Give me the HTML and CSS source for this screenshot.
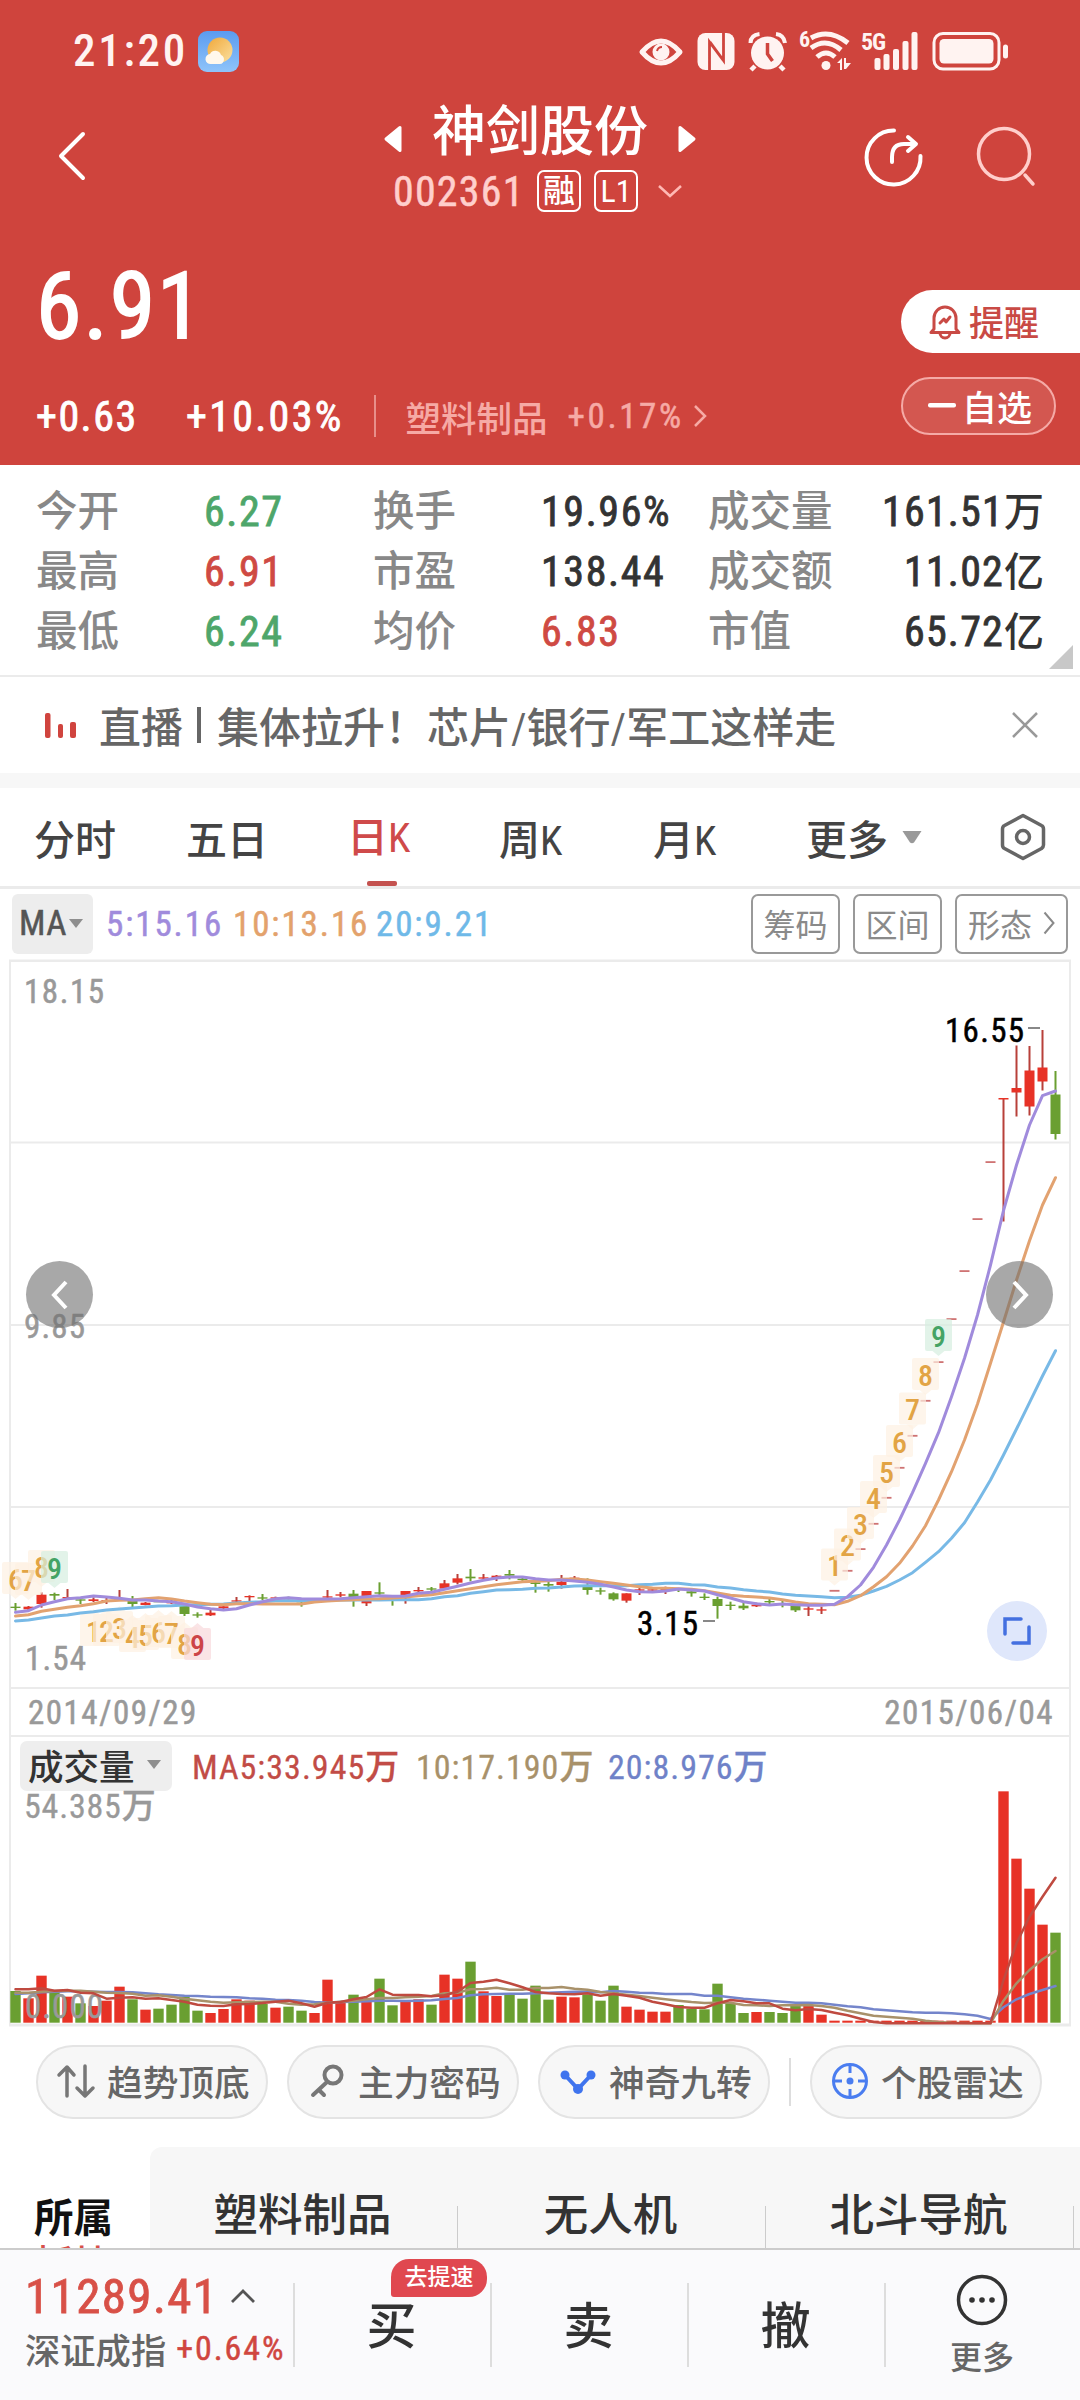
FILE: index.html
```html
<!DOCTYPE html>
<html lang="zh-CN">
<head>
<meta charset="utf-8">
<title>神剑股份 002361</title>
<link rel="stylesheet" href="styles.css">
</head>
<body>
<div class="phone">
  <header class="hero">
    <div class="status">
      <span class="clock">21:20</span>
      <svg class="weather" width="41" height="41" viewBox="0 0 41 41">
        <defs>
          <linearGradient id="sky" x1="0" y1="0" x2="0" y2="1"><stop offset="0" stop-color="#5b9bf0"/><stop offset="1" stop-color="#8fc4fa"/></linearGradient>
          <linearGradient id="sun" x1="0" y1="0" x2="1" y2="1"><stop offset="0" stop-color="#f0a83a"/><stop offset="1" stop-color="#fbe0a0"/></linearGradient>
        </defs>
        <rect width="41" height="41" rx="9" fill="url(#sky)"/>
        <circle cx="22" cy="19" r="12.500" fill="url(#sun)"/>
        <path d="M13 33a5 5 0 0 1-1-10 6 6 0 0 1 11 1 4.700 4.700 0 0 1-1 9z" fill="#fff8ec"/>
      </svg>
      <svg class="status-icons" width="380" height="44" viewBox="0 0 380 44" fill="#fff3f1">
        <path d="M3 23Q22 1 41 23Q22 45 3 23Z" fill="none" stroke="#fff3f1" stroke-width="5" stroke-linejoin="round"/>
        <circle cx="22" cy="23" r="8.500"/><path d="M18 22q1-4 5-4" stroke="#cf443d" stroke-width="2" fill="none"/>
        <rect x="58.500" y="4" width="37" height="37" rx="8"/>
        <path d="M70.500 41V13L84 31M84.500 4V31.500L71 13" fill="none" stroke="#cf443d" stroke-width="2.800"/>
        <circle cx="128.500" cy="24" r="16.500"/>
        <path d="M116 37l-4 4M141 37l4 4" stroke="#fff3f1" stroke-width="4.500"/>
        <path d="M111.500 14q0-8 9-9M137 5q8 1 9 9" stroke="#fff3f1" stroke-width="4" fill="none"/>
        <path d="M128.500 14v11l5 7" stroke="#cf443d" stroke-width="3.500" fill="none"/>
        <text x="160" y="18" font-size="22" class="tiny">6</text>
        <g fill="none" stroke="#fff3f1" stroke-width="5">
          <path d="M172 9Q190-1 209 14"/><path d="M172 19Q187 8 202 21"/><path d="M178 28Q187 20 196 28"/>
        </g>
        <circle cx="187" cy="36.500" r="4.500"/>
        <path d="M198 34l5-5v12h-2v-7zM205 29h2v5h5l-5 6h-2z"/>
        <text x="222" y="21" font-size="24" class="tiny" textLength="25">5G</text>
        <rect x="235.500" y="29" width="6" height="12" rx="2"/><rect x="244.500" y="25" width="6" height="16" rx="2"/><rect x="254" y="20" width="6" height="21" rx="2"/><rect x="263.500" y="12" width="6" height="29" rx="2"/><rect x="272.500" y="3" width="6" height="38" rx="2"/>
        <rect x="295" y="4.500" width="65" height="35.500" rx="9" fill="none" stroke="#fff3f1" stroke-width="3"/>
        <rect x="300.500" y="10" width="54" height="24.500" rx="4.500"/>
        <rect x="364" y="15.500" width="5" height="14" rx="2.500"/>
      </svg>
    </div>

    <nav class="titlebar">
      <svg class="back" width="30" height="50" viewBox="0 0 30 50"><path d="M26 3L4 25L26 47" fill="none" stroke="#fff" stroke-width="4" stroke-linecap="round" stroke-linejoin="round"/></svg>
      <div class="title">
        <div class="name">
          <svg width="20" height="28" viewBox="0 0 20 28"><path d="M17 2.500v23L3 14z" fill="#fff" stroke="#fff" stroke-width="3" stroke-linejoin="round"/></svg>
          <h1>神剑股份</h1>
          <svg width="20" height="28" viewBox="0 0 20 28"><path d="M3 2.500v23L17 14z" fill="#fff" stroke="#fff" stroke-width="3" stroke-linejoin="round"/></svg>
        </div>
        <div class="code">
          <span>002361</span><b>融</b><b>L1</b>
          <svg width="26" height="14" viewBox="0 0 26 14"><path d="M2 2l11 10L24 2" fill="none" stroke="#ffb9b4" stroke-width="2.500"/></svg>
        </div>
      </div>
      <div class="actions">
        <svg width="62" height="62" viewBox="0 0 62 62" fill="none" stroke="#fff" stroke-width="4" stroke-linecap="round"><path d="M32 4.500A27 27 0 1 0 58.500 30"/><path d="M30 36v-5q0-13 12-13H53M46 11l8 7-8 7" stroke-linejoin="round"/></svg>
        <svg width="62" height="62" viewBox="0 0 62 62" fill="none" stroke="#ffcecb" stroke-width="3.500" stroke-linecap="round"><circle cx="28" cy="28" r="25.500"/><path d="M49 49l8 9"/></svg>
      </div>
    </nav>

    <div class="quote">
      <div class="quote-main">
        <div class="price">6.91</div>
        <div class="change">
          <span class="diff">+0.63</span><span class="pct">+10.03%</span><i></i><span class="sector">塑料制品</span><span class="sector-pct">+0.17%</span>
          <svg width="14" height="24" viewBox="0 0 14 24"><path d="M2 2l10 10L2 22" fill="none" stroke="#f6aaa5" stroke-width="2.500"/></svg>
        </div>
      </div>
      <div class="quote-side">
        <div class="remind">
          <svg width="34" height="36" viewBox="0 0 34 36" fill="none" stroke="#c94a45" stroke-width="3" stroke-linejoin="round" stroke-linecap="round"><path d="M6 26V15a11 11 0 0 1 22 0V26L31 29.500H3z"/><path d="M12 20l4-4 2 3 4-5"/><path d="M12 30a5 5 0 0 0 10 0"/></svg>
          <span>提醒</span>
        </div>
        <div class="watch"><svg width="29" height="5"><rect width="28" height="4.500" rx="2" fill="#fff"/></svg><span>自选</span></div>
      </div>
    </div>
  </header>

  <section class="stats">
    <span>今开</span><b class="green">6.27</b><span>换手</span><b>19.96%</b><span>成交量</span><b class="end">161.51<em>万</em></b>
    <span>最高</span><b class="red">6.91</b><span>市盈</span><b>138.44</b><span>成交额</span><b class="end">11.02<em>亿</em></b>
    <span>最低</span><b class="green">6.24</b><span>均价</span><b class="red">6.83</b><span>市值</span><b class="end">65.72<em>亿</em></b>
    <div class="corner"></div>
  </section>

  <section class="news">
    <svg width="32" height="26" viewBox="0 0 32 26" fill="#d0443e"><rect x="0" y="1" width="5.500" height="25" rx="2"/><rect x="13" y="12" width="5" height="14" rx="2"/><rect x="25" y="10" width="6" height="16" rx="2"/></svg>
    <p>直播<u></u>集体拉升！芯片/银行/军工这样走</p>
    <svg width="28" height="28" viewBox="0 0 28 28"><path d="M2 2l24 24M26 2L2 26" stroke="#999" stroke-width="2.500"/></svg>
  </section>

  <nav class="tabs">
    <span class="t1">分时</span><span class="t2">五日</span><span class="t3 on">日K</span><span class="t4">周K</span><span class="t5">月K</span>
    <span class="t6">更多<svg width="22" height="14" viewBox="0 0 22 14"><path d="M1.500 1h19L13 12.500q-2 1.500-4 0z" fill="#999"/></svg></span>
    <svg class="hex" width="46" height="48" viewBox="0 0 46 48" fill="none" stroke="#666" stroke-width="3.500" stroke-linejoin="round"><path d="M23 2.500L41.500 12.500q2 1 2 3.500V32q0 2-2 3.500L23 45.500L4.500 35.500q-2-1-2-3.500V16q0-2.500 2-3.500z"/><circle cx="23" cy="24" r="6.500"/></svg>
  </nav>

  <section class="ma">
    <div class="ma-pick">MA<svg width="14" height="9" viewBox="0 0 14 9"><path d="M0 0h14L7 9z" fill="#8e8e8e"/></svg></div>
    <span class="ma5">5:15.16</span><span class="ma10">10:13.16</span><span class="ma20">20:9.21</span>
    <div class="tools"><b>筹码</b><b>区间</b><b>形态<svg width="12" height="24" viewBox="0 0 12 24"><path d="M1.500 1.500L10.500 12L1.500 22.500" fill="none" stroke="#8a8a8a" stroke-width="2"/></svg></b></div>
  </section>

  <section class="chart">
    <svg id="kline" width="1080" height="729" viewBox="0 960 1080 729"></svg>
    <button class="pan left"><svg width="18" height="30" viewBox="0 0 18 30"><path d="M15 2L3 15L15 28" fill="none" stroke="#fff" stroke-width="4"/></svg></button>
    <button class="pan right"><svg width="18" height="30" viewBox="0 0 18 30"><path d="M3 2L15 15L3 28" fill="none" stroke="#fff" stroke-width="4"/></svg></button>
    <button class="full"><svg width="28" height="28" viewBox="0 0 28 28"><path d="M18 2H2V17M26 10V26H10" fill="none" stroke="#4470e0" stroke-width="3.500" stroke-linecap="round"/></svg></button>
  </section>
  <div class="dates"><span>2014/09/29</span><span>2015/06/04</span></div>

  <section class="volume">
    <svg id="vol" width="1080" height="291" viewBox="0 1737 1080 291"></svg>
    <div class="vol-head">
      <div class="vol-pick">成交量<svg width="14" height="9" viewBox="0 0 14 9"><path d="M0 0h14L7 9z" fill="#8e8e8e"/></svg></div>
      <span class="v5">MA5:33.945万</span><span class="v10">10:17.190万</span><span class="v20">20:8.976万</span>
    </div>
    <div class="vol-max">54.385万</div>
  </section>

  <section class="chips">
    <div class="chip"><svg width="38" height="34" viewBox="0 0 38 34" fill="none" stroke="#777" stroke-width="3.500" stroke-linecap="round" stroke-linejoin="round"><path d="M10 32V3M2 11l8-8 7 8M28 2v29M20 24l8 8 8-8"/></svg>趋势顶底</div>
    <div class="chip"><svg width="38" height="34" viewBox="0 0 38 34" fill="none" stroke="#777" stroke-width="4" stroke-linecap="round"><circle cx="25" cy="11" r="8.500"/><path d="M19 18L5 31M11 26l5 5M6 24"/></svg>主力密码</div>
    <div class="chip"><svg width="38" height="34" viewBox="0 0 38 34" fill="#3f74ee"><path d="M6 11l13 14L32 11" fill="none" stroke="#3f74ee" stroke-width="4"/><circle cx="6" cy="11" r="4.500"/><circle cx="32" cy="11" r="4.500"/><circle cx="19" cy="25" r="5"/></svg>神奇九转</div>
    <i></i>
    <div class="chip"><svg width="38" height="38" viewBox="0 0 38 38" fill="none" stroke="#4a7df0" stroke-width="3"><circle cx="19" cy="19" r="16.500"/><path d="M19 2v9M19 27v9M2 19h9M27 19h9"/><circle cx="19" cy="19" r="3.500" fill="#4a7df0" stroke="none"/></svg>个股雷达</div>
  </section>

  <section class="boards">
    <div class="belong"><b>所属</b><em>板块</em></div>
    <div class="board-list"><span>塑料制品</span><span>无人机</span><span>北斗导航</span><span></span></div>
  </section>

  <footer class="bottom">
    <div class="index">
      <div class="idx-val">11289.41<svg width="26" height="16" viewBox="0 0 26 16"><path d="M2 14L13 3L24 14" fill="none" stroke="#555" stroke-width="2.800"/></svg></div>
      <div class="idx-name">深证成指<span>+0.64%</span></div>
    </div>
    <div class="trade">买<mark>去提速</mark></div>
    <div class="trade">卖</div>
    <div class="trade">撤</div>
    <div class="more"><svg width="52" height="52" viewBox="0 0 52 52"><circle cx="26" cy="26" r="23.500" fill="none" stroke="#333" stroke-width="3.500"/><circle cx="16" cy="26" r="2.800" fill="#333"/><circle cx="26" cy="26" r="2.800" fill="#333"/><circle cx="36" cy="26" r="2.800" fill="#333"/></svg><span>更多</span></div>
  </footer>
</div>
<script src="chart.js"></script>
</body>
</html>
```
FILE: styles.css
```css
* { box-sizing: border-box; margin: 0; padding: 0; }
body { width: 1080px; background: #fff; }
svg { display: block; flex: none; overflow: visible; }
b, em, i, u { font-weight: inherit; font-style: normal; text-decoration: none; }
.phone {
  width: 1080px; height: 2400px; overflow: hidden;
  display: flex; flex-direction: column;
  font-family: Roboto, "Noto Sans CJK SC", sans-serif;
  font-stretch: 75%; font-weight: 450; white-space: nowrap; background: #fff;
}
.phone > * { flex: none; }

/* figures are drawn slightly heavier than the regular face */
.diff, .pct, .stats b, .idx-val { -webkit-text-stroke: .8px currentColor; }
.code span, .sector-pct, .ma-pick, .ma span, .dates, .idx-name span { -webkit-text-stroke: .5px currentColor; }
.v5, .v10, .v20, .vol-max { -webkit-text-stroke: .3px currentColor; }
.price { -webkit-text-stroke: 1.800px currentColor; }

/* red header */
.hero { height: 465px; background: #cf443d; color: #fff; }
.status { height: 100px; display: flex; align-items: center; padding: 2px 0 0 73px; }
.clock { font-size: 45px; line-height: 50px; width: 125px; letter-spacing: 2.700px; font-weight: 500; color: #fff3f1; }
.status-icons { margin-left: 400px; }
.tiny { font-family: Roboto, sans-serif; font-weight: 700; font-stretch: 75%; }
.titlebar { height: 140px; display: flex; position: relative; padding-left: 57px; }
.back { margin-top: 31px; }
.title { width: 460px; margin-left: 223px; display: flex; flex-direction: column; }
.name { display: flex; align-items: center; justify-content: center; gap: 29px; height: 62px; padding-top: 4px; }
.name h1 { font-size: 54px; font-weight: 500; line-height: 62px; }
.name svg { margin-top: 12px; }
.code { display: flex; align-items: center; height: 50px; margin-top: 4px; padding-left: 83px; font-size: 42px; }
.code span { color: #ffcfcc; letter-spacing: 1.200px; width: 144px; }
.code b { height: 42px; width: 44px; margin-right: 13px; border: 2px solid #fff; border-radius: 7px; font-size: 32px; line-height: 39px; text-align: center; }
.code svg { margin-left: 6px; }
.actions { display: flex; gap: 52px; margin-left: 92px; padding-top: 26px; }
.quote { display: flex; justify-content: space-between; height: 224px; }
.quote-main { padding-left: 36px; }
.price { font-size: 92px; line-height: 100px; height: 127px; padding-top: 17px; letter-spacing: 2px; }
.change { display: flex; align-items: center; height: 60px; margin-top: 19px; font-size: 42px; }
.diff { width: 150px; letter-spacing: 1.500px; }
.pct { width: 188px; letter-spacing: 2.300px; }
.change i { width: 1.500px; height: 42px; background: #e88f8a; }
.sector, .sector-pct { font-size: 35px; color: #f6aaa5; }
.sector { margin-left: 30px; width: 162px; font-size: 35.500px; }
.sector-pct { letter-spacing: 2.600px; width: 125px; }
.quote-side { display: flex; flex-direction: column; width: 179px; padding-top: 50px; gap: 24px; }
.remind { height: 63px; background: #fff; color: #c94a45; border-radius: 32px 0 0 32px; display: flex; align-items: center; padding: 0 0 2px 27px; gap: 7px; font-size: 35px; }
.watch { height: 58px; width: 155px; border: 2px solid #f5aaa6; border-radius: 30px; background: rgba(255,255,255,.1); display: flex; align-items: center; padding: 0 0 2px 25px; gap: 5px; font-size: 35px; }

/* quote details */
.stats { position: relative; height: 212px; padding: 17px 38px 0 36px; border-bottom: 2px solid #ebebeb;
  display: grid; grid-template-columns: 168px 169px 168px 167px 150px 1fr; grid-auto-rows: 60px; align-items: center; font-size: 41.500px; line-height: 60px; color: #333; }
.stats span { color: #888; }
.stats b { font-size: 42px; letter-spacing: 1.600px; }
.stats em { font-size: 40px; letter-spacing: 0; -webkit-text-stroke: 0; }
.stats .green { color: #4ea66a; }
.stats .red { color: #cf4a43; }
.stats .end { justify-self: end; margin-right: -2px; letter-spacing: 1.200px; }
.corner { position: absolute; right: 7px; bottom: 6px; border-left: 24px solid transparent; border-bottom: 24px solid #c8c8c8; }

.news { height: 96px; display: flex; align-items: center; padding: 0 41px 1px 45px; color: #666; font-size: 42px; }
.news p { margin-left: 22px; flex: 1; display: flex; align-items: center; }
.news u { width: 4px; height: 36px; background: #666; margin: 0 16px 0 14px; }

/* period tabs */
.tabs { height: 116px; border-top: 15px solid #f7f7f7; border-bottom: 3px solid #ebebeb; display: flex; align-items: center; font-size: 41px; color: #444; padding-left: 34px; padding-bottom: 1px; }
.tabs .t1 { width: 152px; } .tabs .t2 { width: 161px; } .tabs .t3 { width: 152px; } .tabs .t4 { width: 154px; } .tabs .t5 { width: 153px; }
.t6 { width: 194px; display: flex; align-items: center; gap: 13px; }
.tabs .on { color: #cf4a4a; position: relative; height: 98px; line-height: 100px; }
.tabs .on::after { content: ""; position: absolute; left: 20px; bottom: 0; width: 30px; height: 5px; border-radius: 2px; background: #c4524f; }

/* moving averages and tools */
.ma { height: 71px; display: flex; align-items: center; padding: 0 12px 2px; font-size: 35px; }
.ma-pick { width: 81px; height: 60px; background: #ededed; border-radius: 6px; display: flex; align-items: center; gap: 2px; padding-left: 7px; color: #555; letter-spacing: .500px; }
.ma span { letter-spacing: 1.900px; padding-top: 2px; }
.ma5 { margin-left: 13px; width: 127px; color: #a08bdc; }
.ma10 { width: 143px; color: #e3a26c; }
.ma20 { color: #6fb9e8; }
.tools { margin-left: auto; display: flex; gap: 13px; }
.tools b { height: 60px; width: 89px; border: 2px solid #999; border-radius: 7px; display: flex; align-items: center; justify-content: center; gap: 11px; font-size: 32px; color: #8a8a8a; font-weight: 400; padding-bottom: 2px; }
.tools b:last-child { width: 113px; }

/* charts */
.chart { position: relative; height: 729px; }
.chart text, .volume text { font-family: Roboto, sans-serif; font-stretch: 75%; }
.chart button { position: absolute; border: 0; border-radius: 50%; display: flex; align-items: center; justify-content: center; }
.pan { width: 67px; height: 67px; background: rgba(110,110,110,.6); top: 301px; }
.pan.left { left: 26px; }
.pan.right { left: 986px; }
.full { width: 60px; height: 60px; left: 987px; top: 641px; background: #dfe7fb; }
.dates { height: 48px; margin: 0 9px; padding: 0 15px 0 17px; border: solid #ebebeb; border-width: 0 2px 2px; display: flex; align-items: center; justify-content: space-between; font-size: 33px; letter-spacing: 1.500px; color: #999; }
.volume { position: relative; height: 291px; }
.volume > svg { position: absolute; left: 0; top: 0; }
.vol-head { position: relative; display: flex; align-items: center; height: 56px; padding: 0 0 1px 20px; font-size: 34px; letter-spacing: 1px; }
.vol-pick { width: 152px; height: 50px; border-radius: 7px; background: #eee; display: flex; align-items: center; gap: 12px; padding-left: 8px; margin-top: 2px; font-size: 35.500px; letter-spacing: 0; color: #333; padding-bottom: 2px; }
.v5 { width: 224px; margin-left: 20px; color: #c24c46; }
.v10 { width: 192px; color: #a8916a; }
.v20 { color: #6f82c8; }
.vol-max { position: relative; padding-left: 24px; font-size: 34px; letter-spacing: .800px; line-height: 36px; margin-top: -5px; color: #999; }

.chips { display: flex; height: 119px; padding: 17px 0 0 36px; align-items: flex-start; }
.chip { width: 232px; height: 74px; margin-right: 19px; border: 2px solid #e4e4e4; border-radius: 37px; background: #f7f7f7; display: flex; align-items: center; padding: 0 0 3px 19px; gap: 12px; font-size: 35.700px; color: #666; }
.chips i { width: 2px; height: 48px; background: #ddd; margin: 13px 19px 0 0; }

.boards { height: 101px; display: flex; overflow: hidden; }
.belong { width: 150px; padding: 48px 0 0 34px; display: flex; flex-direction: column; font-size: 39.500px; line-height: 47px; }
.belong b { font-weight: 700; color: #111; }
.belong em { color: #d8504a; }
.board-list { flex: 1; background: #f7f7f7; border-top-left-radius: 12px; display: flex; padding-top: 35px; overflow: hidden; }
.board-list span { flex: none; width: 308px; padding-right: 3px; text-align: center; font-size: 44.500px; line-height: 68px; color: #333; background: linear-gradient(#ccc,#ccc) right 24px / 1.500px 60px no-repeat; }

.bottom { height: 152px; background: #fafafc; border-top: 2px solid #ccc; display: flex; }
.index { width: 293px; padding: 15px 0 0 25px; }
.idx-val { display: flex; align-items: center; gap: 12px; height: 62px; font-size: 49px; letter-spacing: 1.400px; color: #d85047; }
.idx-name { display: flex; align-items: center; height: 42px; font-size: 35.300px; color: #666; }
.idx-name span { font-size: 34px; color: #d0463f; margin-left: 10px; letter-spacing: 1.900px; }
.trade { position: relative; width: 197px; font-size: 50px; font-weight: 500; color: #333; text-align: center; line-height: 155px; background: linear-gradient(#ddd,#ddd) left 33px / 2px 84px no-repeat; }
.trade mark { position: absolute; left: 98px; top: 9px; width: 96px; height: 38px; border-radius: 18px 18px 18px 3px; background: #e04850; color: #fff; font-size: 23px; line-height: 37px; }
.more { flex: 1; display: flex; flex-direction: column; align-items: center; padding-top: 24px; font-size: 32px; line-height: 40px; gap: 12px; color: #666; background: linear-gradient(#ddd,#ddd) left 33px / 2px 84px no-repeat; }
```
FILE: chart.js
```js
const RED = '#e73226', GREEN = '#6a9f31', GRID = '#ebebeb';
const X = i => 15.5 + i * 13;

// [direction, high, low, body top, body bottom], in thirds of a pixel below y=1500
const candles = [
  ['g',309,332,320,324],['r',318,332,320,328],['r',277,323,284,312],['g',278,300,282,287],['r',267,296,291,294],
  ['g',298,312,298,302],['r',292,306,298,303],['r',292,312,300,302],['r',270,300,296,299],['g',288,322,303,312],
  ['r',306,316,308,315],['g',300,306,303,305],['r',300,312,304,310],['g',315,348,318,342],['g',337,353,343,346],
  ['r',330,348,338,346],['r',316,327,319,325],['r',291,308,301,304],['r',286,304,288,291],['g',282,300,292,295],
  ['r',290,300,292,294],['g',290,298,294,297],['g',304,320,308,311],['r',298,308,302,305],['r',270,294,289,292],
  ['r',276,292,283,287],['g',270,320,281,296],['r',273,318,273,310],['g',247,285,277,281],['g',285,317,295,299],
  ['r',273,311,273,295],['r',261,280,270,274],['g',261,274,265,269],['r',240,268,250,266],['r',222,253,235,248],
  ['g',207,244,230,235],['r',222,240,232,235],['r',225,243,227,236],['g',210,238,222,227],['g',232,244,236,240],
  ['g',240,278,247,252],['g',245,275,252,257],['r',225,266,245,255],['r',228,245,233,237],['g',235,284,258,270],
  ['g',263,284,271,274],['g',277,302,280,298],['r',280,308,280,302],['r',262,285,268,272],['r',264,278,268,272],
  ['r',260,282,266,269],['g',264,276,266,270],['g',270,290,274,280],['g',280,300,290,294],['g',290,356,297,318],
  ['g',305,330,314,317],['g',308,330,317,325],['r',308,321,314,319],['g',297,312,303,307],['g',303,322,311,315],
  ['g',317,336,317,331],['r',316,348,325,329],['r',320,342,328,331]
];
const limits = [1590.7,1570.7,1549,1523.7,1497.7,1467.7,1435.7,1400.7,1362,1319,1271,1219,1162];
const tail = [['r',1098.5,1221.5,1098,1099.5],['r',1045.5,1116.5,1088,1092.5],['r',1046,1115.5,1070.5,1106.5],['r',1030,1090.5,1067.5,1081.5],['g',1071,1139.5,1094.5,1134]];

const y3 = a => a.map(v => 1500 + v / 3);
const low = a => a.map(v => 1330 + v / 3);
const top3 = a => a.map(v => 960 + v / 3);
const ma5 = [...y3([337,332,315,305,296,293,288,291,295,300,300,303,305,312,321,326,330,326,315,305,296,293,296,297,297,296,293,290,287,289,288,280,277,268,259,249,241,234,231,231,236,240,240,243,247,253,261,270,275,276,273,267,270,273,284,294,305,311,315,312,314,316,316]),
  ...low([823,800,765,712,645,570,488,400,308,200,85]), ...top3([1065,915,752,615,495,407,393])];
const ma10 = [...y3([348,344,334,328,322,317,311,303,301,300,296,293,297,303,308,313,314,311,311,312,312,312,312,306,303,301,299,297,296,294,291,287,284,278,272,266,260,254,250,245,244,242,238,237,240,245,250,255,260,264,265,266,268,272,279,286,289,291,294,299,306,311,313]),
  ...low([824,814,797,770,740,700,648,587,510,425,330,222,100]), ...top3([1086,960,842,735,653])];
const ma20 = [...y3([363,360,354,348,345,339,335,330,327,324,321,318,317,315,314,313,312,309,307,305,302,302,302,301,301,300,300,300,300,299,299,299,296,290,287,280,275,270,269,268,265,264,261,258,257,257,257,257,254,253,250,250,254,255,261,264,269,273,276,282,286,288,290]),
  ...low([803,802,796,783,769,750,728,697,665,625,578,516,450,375,297,218,138,62])];

const rect = (x, y, w, h, f) => `<rect x="${x}" y="${y}" width="${w}" height="${h}" fill="${f}"/>`;
const line = (ys, c, w) => `<polyline points="${ys.map((y, i) => X(i) + ',' + y.toFixed(1)).join(' ')}" fill="none" stroke="${c}" stroke-width="${w}" stroke-linejoin="round" stroke-linecap="round"/>`;
const text = (x, y, s, c, w, size = 33) => `<text x="${x}" y="${y}" font-size="${size}" fill="${c}" stroke="${c}" stroke-width=".5" font-weight="450" textLength="${w}">${s}</text>`;

function candle([d, hi, lo, a, b], i) {
  const c = d === 'r' ? RED : GREEN, wick = d === 'r' ? '#b8403a' : '#6a9f31';
  return rect(X(i) - 1, hi, 2, lo - hi, wick) + rect(X(i) - 5, a, 10, Math.max(b - a, 1.3), c);
}
// count label: a translucent plate with a pointer towards its candle
function tag(i, top, n, kind, below) {
  const fill = { o: '#fdf1e2', g: '#d5eee0', r: '#f8d9db' }[kind], ink = { o: '#e2a445', g: '#45a365', r: '#cc4448' }[kind];
  const x = X(i), p = below ? `M${x - 6} ${top}l6-5 6 5z` : `M${x - 6} ${top + 32}l6 5 6-5z`;
  return `<g fill="${fill}" fill-opacity=".7"><rect x="${x - 13.5}" y="${top}" width="27" height="32" rx="2"/><path d="${p}"/></g>`
    + `<text x="${x}" y="${top + 27.5}" font-size="30" text-anchor="middle" font-weight="500" fill="${ink}">${n}</text>`;
}

let k = '';
for (const y of [1142.5, 1325, 1507]) k += rect(9, y - 1, 1062, 2, GRID);
k += rect(9, 959.5, 1062, 2.5, GRID) + rect(9, 1687, 1062, 2, GRID) + rect(9, 960, 2, 729, GRID) + rect(1069, 960, 2, 729, GRID);
k += text(24, 1003, '18.15', '#999', 80) + text(24, 1338, '9.85', '#999', 61) + text(25, 1670, '1.54', '#999', 61);
candles.forEach((c, i) => { k += candle([c[0], ...y3(c.slice(1))], i); });
limits.forEach((y, i) => { k += rect(X(63 + i) - 5, y - .8, 10, 1.8, '#cf7373'); });
tail.forEach((c, i) => { k += candle(c, 76 + i); });
[[0,1562],[1,1563],[2,1550]].forEach(([i, t], n) => { k += tag(i, t, n + 6, 'o'); });
k += tag(3, 1551, 9, 'g');
[1614,1614,1611,1620,1618,1615,1616,1627].forEach((t, n) => { k += tag(n + 6, t, n + 1, 'o', true); });
k += tag(14, 1628, 9, 'r', true);
[1548.5,1528.5,1507,1481,1455,1425,1392.5,1358].forEach((t, n) => { k += tag(63 + n, t, n + 1, 'o'); });
k += tag(71, 1319, 9, 'g');
k += line(ma20, '#78b9e6', 3) + line(ma10, '#e2a270', 3) + line(ma5, '#a08bdc', 3);
k += text(945, 1042, '16.55', '#000', 79) + rect(1028, 1027, 12, 2, '#888') + text(637, 1635, '3.15', '#000', 61) + rect(703, 1620, 12, 2, '#888');
document.getElementById('kline').innerHTML = k;

// volume bars: top edge in thirds of a pixel below y=1730
const bars = 'g783 r805 r737 g785 r800 g820 r828 r812 r770 g808 r839 g836 g824 g800 g842 r849 r837 r808 r812 g822 r833 g830 g842 r849 r749 r818 g794 r816 g746 g826 r814 r808 g824 r734 r746 g695 r784 r798 g790 g806 g767 g809 r800 r802 g793 g812 g767 r830 r839 r845 r845 g825 g836 g838 g761 g820 g849 r846 g846 g849 g826 r828 r854'.split(' ');
for (let i = 0; i < 13; i++) bars.push('r872');
bars.push('r184', 'r386', 'r476', 'r584', 'g608');
const y7 = a => a.map(v => 1730 + v / 3);
const v5 = [778,778,775,782,780,788,790,806,803,802,806,805,810,815,824,827,828,823,822,819,815,812,820,830,818,816,808,801,778,794,795,795,799,796,785,759,755,749,760,772,786,790,792,793,790,797,792,797,803,815,823,831,833,833,820,810,814,820,820,836,841,837,840,848,856,866,876,880,880,880,880,880,880,880,880,880,750,640,560,500,443];
const v10 = [788,788,785,783,782,782,785,788,789,791,797,796,800,806,811,815,818,817,816,815,815,821,824,823,818,815,812,808,804,804,802,800,798,790,788,778,777,773,779,779,774,774,771,776,779,786,790,794,798,803,808,812,816,819,818,818,825,826,828,826,826,825,828,833,842,850,857,860,863,866,872,876,878,879,880,880,812,760,720,688,663];
const v20 = [792,790,787,785,784,784,785,786,786,787,790,793,795,797,798,800,801,802,805,806,809,810,812,816,818,816,815,814,812,812,813,812,811,807,804,796,793,792,791,791,790,788,787,785,785,787,783,785,788,789,792,792,792,797,797,802,806,809,812,815,818,818,820,824,829,832,838,841,844,847,848,848,850,853,857,867,832,808,792,780,768];
let v = rect(9, 1737, 2, 289, GRID) + rect(1069, 1737, 2, 289, GRID) + rect(9, 2023.5, 1062, 3, GRID);
bars.forEach((b, i) => { const y = 1730 + b.slice(1) / 3; v += rect(X(i) - 5.2, y, 10.4, 2022.7 - y, b[0] === 'r' ? RED : GREEN); });
v += text(25, 2018, '0.000', '#999', 78);
v += line(y7(v20), '#7485cb', 2.5) + line(y7(v10), '#a8916a', 2.5) + line(y7(v5), '#bf4a40', 2.5);
document.getElementById('vol').innerHTML = v;
```
